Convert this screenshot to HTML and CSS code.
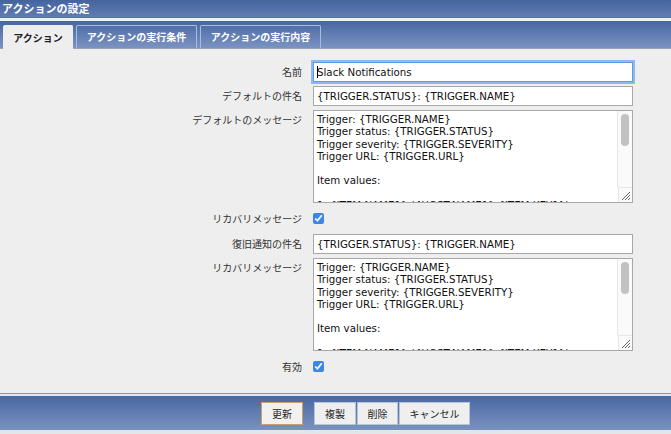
FILE: index.html
```html
<!DOCTYPE html>
<html lang="ja">
<head>
<meta charset="utf-8">
<title>アクションの設定</title>
<link rel="stylesheet" href="styles.css">
</head>
<body>
<div class="titlebar">アクションの設定</div>
<div class="tabbar">
  <div class="tab active">アクション</div>
  <div class="tab">アクションの実行条件</div>
  <div class="tab">アクションの実行内容</div>
</div>
<div class="content">
  <div class="form">
    <label class="lbl">名前</label>
    <div class="field-wrap">
      <input class="field focused" type="text" value="Slack Notifications">
      <span class="caret"></span>
    </div>

    <label class="lbl">デフォルトの件名</label>
    <input class="field" type="text" value="{TRIGGER.STATUS}: {TRIGGER.NAME}">

    <label class="lbl">デフォルトのメッセージ</label>
    <div class="area-wrap">
      <textarea class="area">Trigger: {TRIGGER.NAME}
Trigger status: {TRIGGER.STATUS}
Trigger severity: {TRIGGER.SEVERITY}
Trigger URL: {TRIGGER.URL}

Item values:

1. {ITEM.NAME1} ({HOST.NAME1}:{ITEM.KEY1}): {ITEM.VALUE1}
2. {ITEM.NAME2} ({HOST.NAME2}:{ITEM.KEY2}): {ITEM.VALUE2}
3. {ITEM.NAME3} ({HOST.NAME3}:{ITEM.KEY3}): {ITEM.VALUE3}

Original event ID: {EVENT.ID}</textarea>
      <div class="sb"><div class="thumb"></div></div>
      <div class="corner"><svg width="13" height="14" viewBox="0 0 13 14"><path d="M3 12 L11 4 M6 12 L11 7 M9 12 L11 10" stroke="#666" stroke-width="1" fill="none"/></svg></div>
    </div>

    <label class="lbl check-lbl">リカバリメッセージ</label>
    <div class="check-cell"><input class="check" type="checkbox" checked></div>

    <label class="lbl">復旧通知の件名</label>
    <input class="field" type="text" value="{TRIGGER.STATUS}: {TRIGGER.NAME}">

    <label class="lbl">リカバリメッセージ</label>
    <div class="area-wrap">
      <textarea class="area">Trigger: {TRIGGER.NAME}
Trigger status: {TRIGGER.STATUS}
Trigger severity: {TRIGGER.SEVERITY}
Trigger URL: {TRIGGER.URL}

Item values:

1. {ITEM.NAME1} ({HOST.NAME1}:{ITEM.KEY1}): {ITEM.VALUE1}
2. {ITEM.NAME2} ({HOST.NAME2}:{ITEM.KEY2}): {ITEM.VALUE2}
3. {ITEM.NAME3} ({HOST.NAME3}:{ITEM.KEY3}): {ITEM.VALUE3}

Original event ID: {EVENT.ID}</textarea>
      <div class="sb"><div class="thumb"></div></div>
      <div class="corner"><svg width="13" height="14" viewBox="0 0 13 14"><path d="M3 12 L11 4 M6 12 L11 7 M9 12 L11 10" stroke="#666" stroke-width="1" fill="none"/></svg></div>
    </div>

    <label class="lbl check-lbl">有効</label>
    <div class="check-cell"><input class="check" type="checkbox" checked></div>
  </div>
</div>
<div class="footer">
  <div class="bar">
    <button class="btn primary">更新</button>
    <div class="btn-group">
      <button class="btn">複製</button>
      <button class="btn">削除</button>
      <button class="btn">キャンセル</button>
    </div>
  </div>
</div>
</body>
</html>
```
FILE: styles.css
```css
html, body {
  margin: 0;
  padding: 0;
}
body {
  background: #e3e6e9;
  font-family: "Noto Sans CJK JP", "DejaVu Sans", sans-serif;
  width: 671px;
  height: 434px;
  overflow: hidden;
}

.titlebar {
  height: 17px;
  line-height: 16px;
  padding-left: 2px;
  background: linear-gradient(#45649e, #607db1);
  border-bottom: 1px solid #56709f;
  color: #fff;
  font-weight: bold;
  font-size: 11px;
}

.tabbar {
  height: 27px;
  border-top: 3px solid #edf2f9;
  border-bottom: 1px solid #98a3b3;
  background: linear-gradient(#4767a2, #7b93c1);
  display: flex;
  align-items: flex-end;
  padding-left: 3px;
  gap: 3px;
}
.tab {
  height: 23px;
  box-sizing: border-box;
  border: 1px solid #a6bce2;
  border-bottom: none;
  border-radius: 2px 2px 0 0;
  color: #fff;
  font-weight: bold;
  font-size: 10px;
  line-height: 22px;
  text-align: center;
  width: 121px;
}
.tab.active {
  width: 70px;
  height: 24px;
  margin-bottom: -1px;
  background: #eeeeee;
  border-color: #eeeeee;
  color: #222;
  line-height: 24px;
}

.content {
  background: #eeeeee;
  height: 344px;
  box-sizing: border-box;
  padding-top: 13px;
}

.form {
  display: grid;
  grid-template-columns: 302px 320px;
  column-gap: 11px;
  row-gap: 4px;
  align-items: start;
}
.lbl {
  justify-self: end;
  font-size: 10px;
  line-height: 20px;
  color: #333;
  white-space: nowrap;
}
.check-lbl {
  line-height: 23px;
}

.field-wrap {
  position: relative;
  height: 20px;
}
.caret {
  position: absolute;
  left: 4px;
  top: 4px;
  width: 1px;
  height: 12px;
  background: #000;
}
.field {
  display: block;
  box-sizing: border-box;
  width: 320px;
  height: 20px;
  margin: 0;
  padding: 0 3px;
  border: 1px solid #a8a8a8;
  background: #fff;
  font-family: "DejaVu Sans", sans-serif;
  font-size: 10.25px;
  color: #111;
  outline: none;
}
.field.focused {
  border-color: #5e9be6;
  box-shadow: 0 0 0 2px #8fb8ef;
}

.area-wrap {
  position: relative;
  width: 320px;
  height: 93px;
}
.area {
  display: block;
  box-sizing: border-box;
  width: 320px;
  height: 93px;
  margin: 0;
  padding: 2px 18px 2px 3px;
  border: 1px solid #a8a8a8;
  background: #fff;
  font-family: "DejaVu Sans", sans-serif;
  font-size: 10.25px;
  line-height: 12.3px;
  color: #111;
  outline: none;
  resize: none;
  overflow: hidden;
}
.sb {
  position: absolute;
  right: 1px;
  top: 1px;
  bottom: 16px;
  width: 14px;
  background: #fafafa;
  border-left: 1px solid #e6e6e6;
}
.thumb {
  position: absolute;
  left: 3px;
  top: 3px;
  width: 8px;
  height: 32px;
  border-radius: 4px;
  background: #c2c2c2;
}
.corner {
  position: absolute;
  right: 1px;
  bottom: 1px;
  width: 14px;
  height: 15px;
  box-sizing: border-box;
  background: #fafafa;
  border-left: 1px solid #e6e6e6;
  border-top: 1px solid #e6e6e6;
}
.corner svg {
  display: block;
}

.check-cell {
  height: 23px;
  display: flex;
  align-items: center;
}
.check {
  width: 11px;
  height: 11px;
  margin: 0;
  accent-color: #3a87e6;
}

.footer {
  border-top: 1px solid #8797b5;
  padding-top: 2px;
  background: #e3e7ec;
}
.bar {
  height: 34px;
  box-sizing: border-box;
  background: linear-gradient(#4868a2, #7a92bf);
  display: flex;
  align-items: flex-start;
  padding: 6px 0 0 261px;
  gap: 11px;
}
.btn-group {
  display: flex;
  gap: 1px;
}
.btn {
  height: 23px;
  box-sizing: border-box;
  margin: 0;
  padding: 0 9px;
  background: #efefef;
  border: 1px solid #b7c3d6;
  font-family: "Noto Sans CJK JP", sans-serif;
  font-size: 10px;
  color: #222;
  line-height: 20px;
}
.btn.primary {
  width: 42px;
  border-color: #c9a06a;
  background: #f2f1ef;
}
.btn-group .btn:nth-child(1) { width: 42px; }
.btn-group .btn:nth-child(2) { width: 41px; }
.btn-group .btn:nth-child(3) { width: 71px; }
```
